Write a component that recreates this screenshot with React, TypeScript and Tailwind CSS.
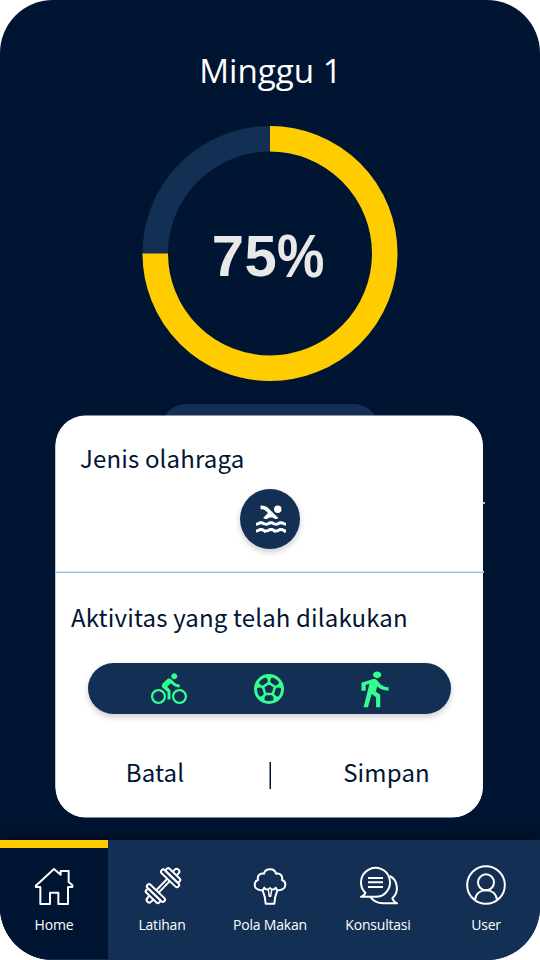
import type { ReactNode } from "react";
import { MdDirectionsBike, MdPool } from "react-icons/md";

function HomeIcon() {
  return (
    <svg width="44" height="43" viewBox="96 105 132 129" fill="none" stroke="white" strokeWidth="6" strokeLinejoin="round">
      <path d="M162 117L107.500 167V171H121V222H150V188H175V222H204V171H217V166L206 156V123H182V134Z" />
    </svg>
  );
}

function DumbbellHalf() {
  return (
    <>
      <path d="M0 -5H24M0 5H24" />
      <rect x="24" y="-35" width="13" height="70" rx="6" />
      <rect x="37" y="-27" width="13" height="54" rx="6" />
      <path d="M50 -8H59A8 8 0 0 1 59 8H50" />
    </>
  );
}

function DumbbellIcon() {
  return (
    <svg width="44" height="43" viewBox="420 105 132 129" fill="none" stroke="white" strokeWidth="6" strokeLinejoin="round">
      <g transform="translate(489 167) rotate(-46)">
        <DumbbellHalf />
        <g transform="rotate(180)">
          <DumbbellHalf />
        </g>
      </g>
    </svg>
  );
}

function BroccoliIcon() {
  return (
    <svg width="44" height="43" viewBox="114 105 132 129" fill="none" stroke="white" strokeWidth="6" strokeLinejoin="round" strokeLinecap="round">
      <path d="M162 131A18.500 17 0 0 1 198 131C211 128 219 138 216 150C230 155 229 175 214 179C206 183 200 181 197 173C192 181 184 179 180 174C176 179 168 181 163 173C160 181 154 183 146 179C131 175 130 155 144 150C141 138 149 128 162 131Z" />
      <path d="M158 181Q166 200 167 221H193Q194 200 202 181" />
      <path d="M175 180L178 199M185 180L182 199" strokeWidth="4.500" />
    </svg>
  );
}

function ChatIcon() {
  return (
    <svg width="44" height="43" viewBox="438 105 132 129" fill="none" stroke="white" strokeWidth="6" strokeLinejoin="round">
      <path d="M466 188A43.500 43.500 0 1 1 496 200.500H453Q465 196 466 188Z" />
      <path d="M539 138C563 149 569 185 547 205Q550 215 561 220H519Q495 219 482 202" />
      <path d="M474 144H519M474 157H519M474 171H519" />
    </svg>
  );
}

function UserIcon() {
  return (
    <svg width="44" height="43" viewBox="192 105 132 129" fill="none" stroke="white" strokeWidth="6">
      <circle cx="258" cy="165" r="56.500" />
      <circle cx="258" cy="157" r="24" />
      <path d="M225 210C227 191 241 181 258 181S289 191 291 210" />
    </svg>
  );
}

function BallIcon() {
  return (
    <svg width="32" height="32" viewBox="-16 -16 32 32" fill="none" stroke="#33ff8f" strokeLinejoin="round">
      <circle r="13.500" strokeWidth="3" />
      <path d="M0 -6.300L6 -1.950L3.700 5.100H-3.700L-6 -1.950Z" strokeWidth="2.500" />
      {[0, 72, 144, 216, 288].map((angle) => (
        <path key={angle} transform={`rotate(${angle})`} fill="#33ff8f" stroke="none" d="M-1.300 -6V-9Q-2 -11.500 -5 -13H5Q2 -11.500 1.300 -9V-6Z" />
      ))}
    </svg>
  );
}

function WalkIcon() {
  return (
    <svg width="50" height="40" viewBox="0 0 24 24" preserveAspectRatio="none" fill="#33ff8f">
      <path d="M13.500 5.500c1.100 0 2-.9 2-2s-.9-2-2-2-2 .9-2 2 .9 2 2 2zM9.800 8.900L7 23h2.100l1.800-8 2.100 2v6h2v-7.500l-2.100-2 .6-3C14.800 12 16.800 13 19 13v-2c-1.900 0-3.500-1-4.300-2.400l-1-1.600c-.4-.6-1-1-1.700-1-.3 0-.5.1-.8.1L6 8.300V13h2V9.600l1.800-.7" />
    </svg>
  );
}

function NavItem({ label, active, children }: { label: string; active?: boolean; children: ReactNode }) {
  return (
    <button
      className={
        active
          ? "flex h-[119px] w-[108px] flex-col items-center border-t-8 border-[#ffcc00] bg-[#001532] pt-[17px]"
          : "flex h-[119px] w-[108px] flex-col items-center pt-[25px]"
      }
    >
      {children}
      <span className="mt-[7px] text-[14px] leading-5 tracking-[-0.2px] whitespace-nowrap">{label}</span>
    </button>
  );
}

function Progress() {
  return (
    <div className="mt-[33px] grid h-[256px] place-items-center">
      <svg className="col-start-1 row-start-1" width="256" height="256" viewBox="0 0 256 256" fill="none" strokeWidth="25.500">
        <circle cx="128" cy="127.500" r="114.750" stroke="#142f54" />
        <path d="M128 12.750A114.750 114.750 0 1 1 13.250 127.500" stroke="#ffcc00" />
      </svg>
      <span className="col-start-1 row-start-1 pt-[4px] pr-[3px] font-['Liberation_Sans',sans-serif] text-[58px] leading-[64px] font-bold tracking-[0.500px] text-[#e8e8e8]">
        75<span className="inline-block w-[48px] origin-left scale-x-[0.92] scale-y-[1.05]">%</span>
      </span>
    </div>
  );
}

function ActivityDialog() {
  return (
    <section className="absolute top-[416px] left-[56px] flex h-[401px] w-[427px] flex-col rounded-[30px] bg-white font-['Noto_Sans_CJK_SC',sans-serif] text-[24px] leading-[38px] tracking-[0.15px] text-[#001532] shadow-[-0.5px_-0.5px_0_#fff,-0.5px_0.5px_0_#fff]">
      <h2 className="mt-[23px] ml-[24px]">Jenis olahraga</h2>
      <div className="mt-[12px] ml-[184px] flex size-[60px] items-center justify-center rounded-full bg-[#142f54] pl-[1px] text-white shadow-[0_3px_6px_rgba(0,0,0,0.2)]">
        <MdPool size={36} />
      </div>
      <div className="mt-[22px] h-[2px] w-[428px] border-t border-b border-t-[#c9e4fa] border-b-[#8cc4f2]" />
      <h2 className="mt-[25px] ml-[15px] whitespace-nowrap">Aktivitas yang telah dilakukan</h2>
      <div className="mt-[27px] ml-[32px] flex h-[51px] w-[363px] items-center rounded-full bg-[#142f54] pl-[63px] text-[#33ff8f] shadow-[0_3px_6px_rgba(0,0,0,0.2)]">
        <MdDirectionsBike size={36} />
        <div className="ml-[66px]"><BallIcon /></div>
        <div className="ml-[63.500px]"><WalkIcon /></div>
      </div>
      <div className="mt-[39px] flex h-[38px] items-center">
        <button className="ml-[69px] w-[60px] whitespace-nowrap">Batal</button>
        <span className="mt-[6px] ml-[84px] h-[27px] w-[2px] border-r border-l border-r-[#001532] border-l-[#808a99]" />
        <button className="ml-[72px] w-[87px] whitespace-nowrap">Simpan</button>
      </div>
    </section>
  );
}

export default function App() {
  return (
    <div className="h-[960px] w-[540px] bg-white">
      <main className="relative flex h-[960px] flex-col overflow-hidden rounded-[53px] bg-[#001532] font-['Open_Sans',sans-serif] text-white">
        <h1 className="mt-[48px] pl-[1px] text-center text-[33.200px] leading-[45px]">Minggu 1</h1>
        <Progress />
        <div className="mx-auto mt-[22px] h-[55px] w-[218px] rounded-[25px] bg-[#142f54] shadow-[0_3px_6px_rgba(0,0,0,0.16)]" />
        <div className="mt-[43px] ml-[240px] h-[1.500px] w-[245px] bg-white/70" />
        <nav className="mt-auto flex h-[120px] bg-[#142f54] shadow-[0_-3px_15px_rgba(0,0,0,0.5)]">
          <NavItem label="Home" active><HomeIcon /></NavItem>
          <NavItem label="Latihan"><DumbbellIcon /></NavItem>
          <NavItem label="Pola Makan"><BroccoliIcon /></NavItem>
          <NavItem label="Konsultasi"><ChatIcon /></NavItem>
          <NavItem label="User"><UserIcon /></NavItem>
        </nav>
        <ActivityDialog />
      </main>
    </div>
  );
}
